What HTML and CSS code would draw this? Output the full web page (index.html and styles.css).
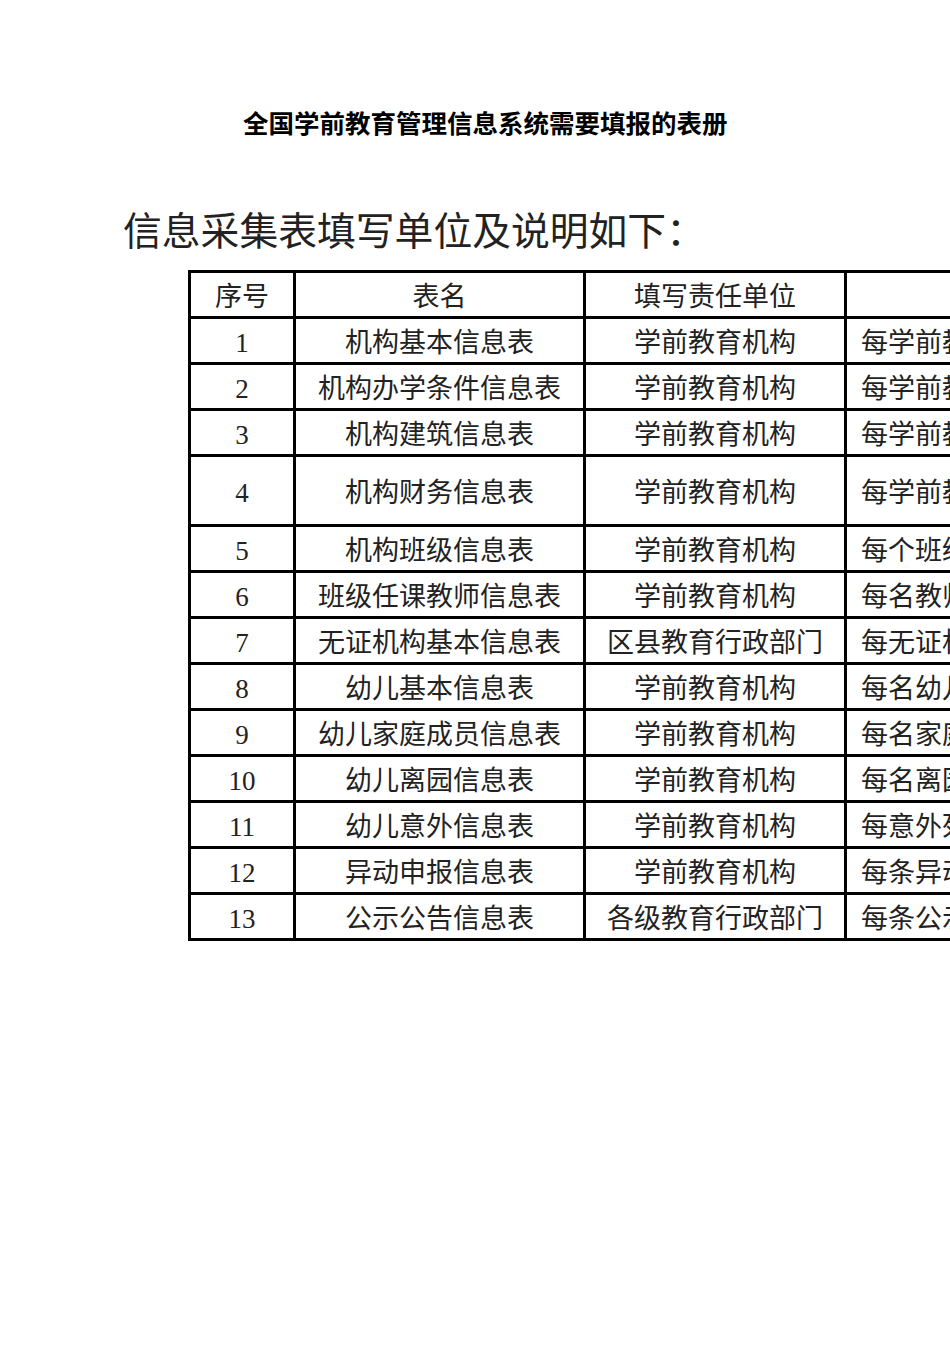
FILE: index.html
```html
<!DOCTYPE html>
<html lang="zh-CN">
<head>
<meta charset="utf-8">
<title>全国学前教育管理信息系统需要填报的表册</title>
<link rel="stylesheet" href="styles.css">
</head>
<body>
<div class="page">
  <h1 class="title">全国学前教育管理信息系统需要填报的表册</h1>
  <p class="subtitle">信息采集表填写单位及说明如下：</p>
  <table class="forms">
    <colgroup>
      <col class="c-no">
      <col class="c-name">
      <col class="c-unit">
      <col class="c-desc">
    </colgroup>
    <thead>
      <tr><th>序号</th><th>表名</th><th>填写责任单位</th><th class="desc"></th></tr>
    </thead>
    <tbody>
      <tr><td>1</td><td>机构基本信息表</td><td>学前教育机构</td><td class="desc">每学前教育机构填写一条</td></tr>
      <tr><td>2</td><td>机构办学条件信息表</td><td>学前教育机构</td><td class="desc">每学前教育机构填写一条</td></tr>
      <tr><td>3</td><td>机构建筑信息表</td><td>学前教育机构</td><td class="desc">每学前教育机构填写一条</td></tr>
      <tr class="tall"><td>4</td><td>机构财务信息表</td><td>学前教育机构</td><td class="desc">每学前教育机构填写一条</td></tr>
      <tr><td>5</td><td>机构班级信息表</td><td>学前教育机构</td><td class="desc">每个班级填写一条</td></tr>
      <tr><td>6</td><td>班级任课教师信息表</td><td>学前教育机构</td><td class="desc">每名教师填写一条</td></tr>
      <tr><td>7</td><td>无证机构基本信息表</td><td>区县教育行政部门</td><td class="desc">每无证机构填写一条</td></tr>
      <tr><td>8</td><td>幼儿基本信息表</td><td>学前教育机构</td><td class="desc">每名幼儿填写一条</td></tr>
      <tr><td>9</td><td>幼儿家庭成员信息表</td><td>学前教育机构</td><td class="desc">每名家庭成员填写一条</td></tr>
      <tr><td>10</td><td>幼儿离园信息表</td><td>学前教育机构</td><td class="desc">每名离园幼儿填写一条</td></tr>
      <tr><td>11</td><td>幼儿意外信息表</td><td>学前教育机构</td><td class="desc">每意外死亡幼儿填写一条</td></tr>
      <tr><td>12</td><td>异动申报信息表</td><td>学前教育机构</td><td class="desc">每条异动填写一条</td></tr>
      <tr><td>13</td><td>公示公告信息表</td><td>各级教育行政部门</td><td class="desc">每条公示公告填写一条</td></tr>
    </tbody>
  </table>
</div>
</body>
</html>
```

FILE: styles.css
```css
html, body {
  margin: 0;
  padding: 0;
  background: #ffffff;
}

body {
  width: 950px;
  height: 1346px;
  overflow: hidden;
}

.page {
  width: 950px;
  overflow: hidden;
  padding-top: 107px;
}

.title {
  margin: 0 0 0 243px;
  font-family: "Noto Sans CJK SC", sans-serif;
  font-size: 25.5px;
  line-height: 30px;
  font-weight: bold;
  color: #000;
  white-space: nowrap;
}

.subtitle {
  margin: 68px 0 0 123px;
  font-family: "Noto Sans CJK SC", sans-serif;
  font-size: 38.8px;
  line-height: 46px;
  font-weight: normal;
  color: #222;
  white-space: nowrap;
}

.forms {
  margin: 19px 0 0 188px;
  border-collapse: separate;
  border-spacing: 0;
  table-layout: fixed;
  width: 979px;
  border-top: 3px solid #000;
  border-left: 3px solid #000;
  font-family: "Liberation Serif", "Noto Sans CJK SC", serif;
  font-size: 27px;
  color: #222;
}

.c-no { width: 105px; }
.c-name { width: 290px; }
.c-unit { width: 261px; }
.c-desc { width: 320px; }

.forms th,
.forms td {
  box-sizing: border-box;
  height: 46px;
  padding: 4px 0 0 0;
  border-right: 3px solid #000;
  border-bottom: 3px solid #000;
  text-align: center;
  vertical-align: middle;
  font-weight: normal;
  line-height: 30px;
  white-space: nowrap;
  overflow: hidden;
}

.forms .tall td {
  height: 70px;
}

.forms .desc {
  text-align: left;
  padding-left: 14px;
}
```
